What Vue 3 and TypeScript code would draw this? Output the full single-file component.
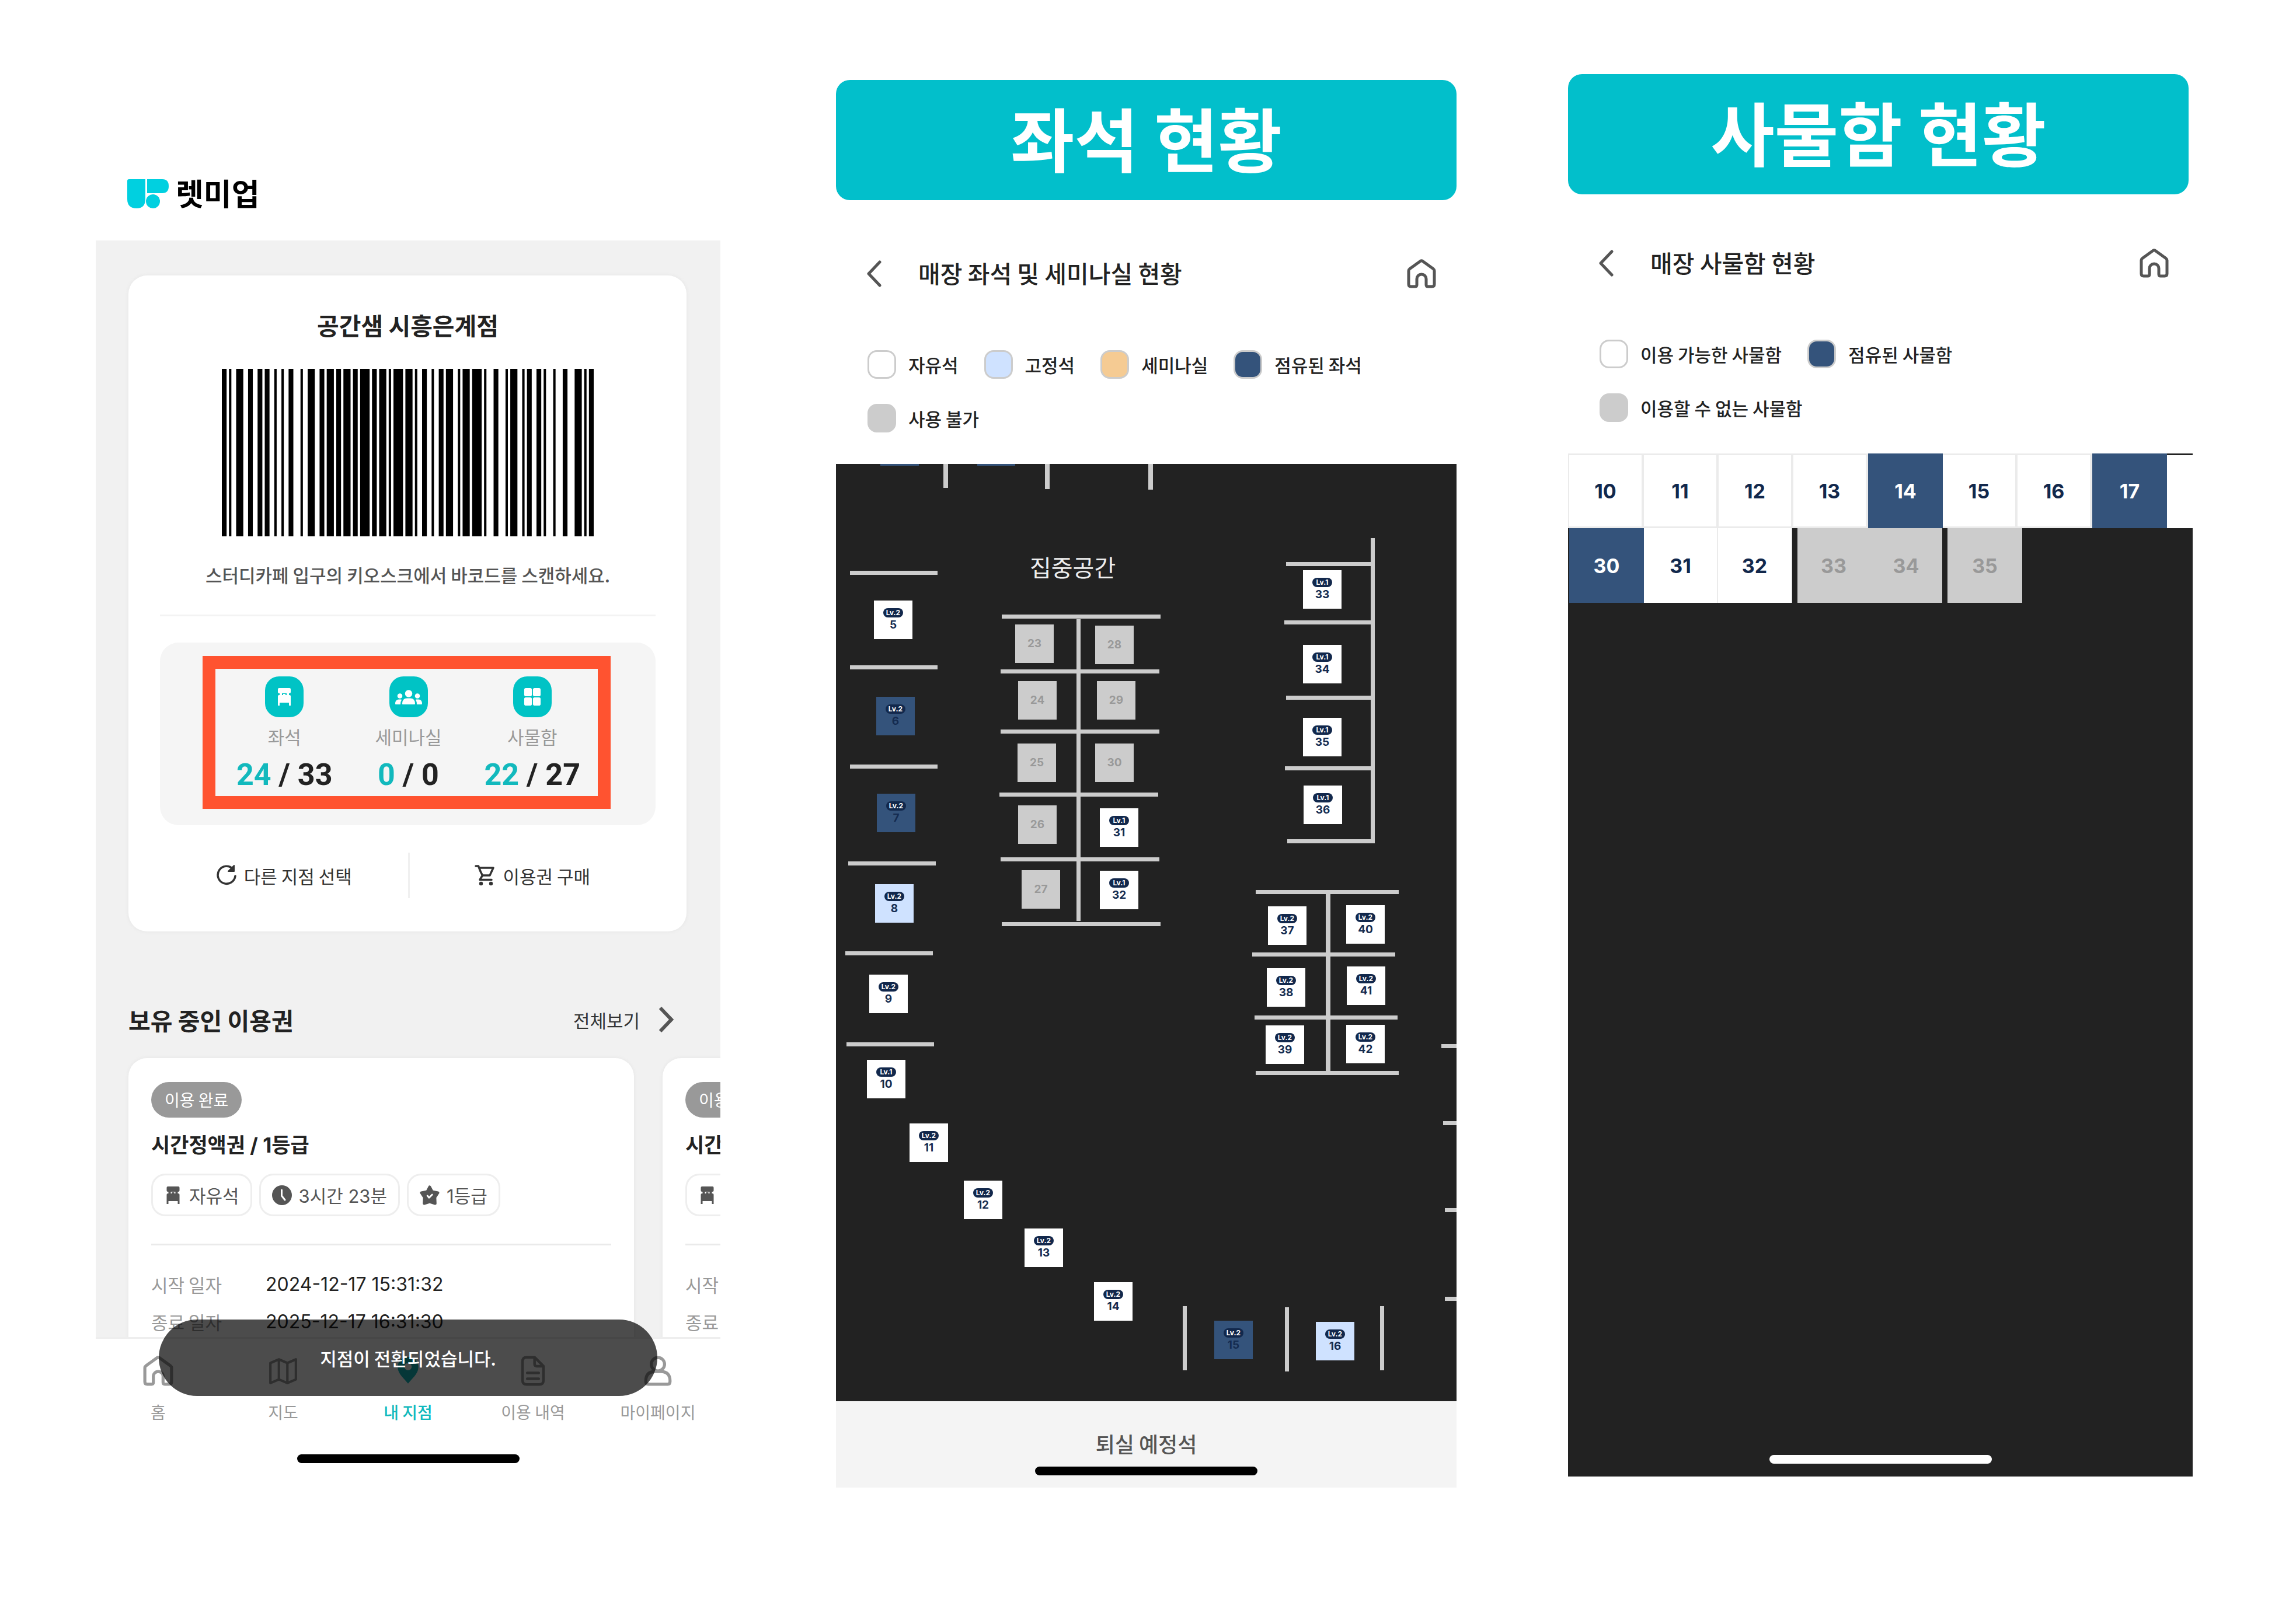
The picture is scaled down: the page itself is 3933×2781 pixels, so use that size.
<script setup lang="ts">
type SeatState = 'free' | 'fixed' | 'taken' | 'off'

interface Seat {
  no: number
  x: number
  y: number
  state: SeatState
  level?: number
}

interface Wall {
  x: number
  y: number
  w: number
  h: number
}

interface Locker {
  no: number
  state: 'free' | 'taken' | 'off'
}

// Barcode bars as [first module, width in modules]
const bars: [number, number][] = [
  [0, 2], [3, 1], [6, 3], [11, 2], [15, 2], [18, 2], [22, 1], [25, 1], [28, 2], [33, 1],
  [36, 3], [41, 2], [44, 3], [48, 2], [51, 3], [55, 2], [58, 4], [63, 2], [66, 3], [70, 1],
  [72, 4], [77, 3], [81, 1], [84, 2], [88, 1], [91, 2], [94, 3], [99, 1], [101, 3], [105, 4],
  [110, 1], [114, 2], [119, 1], [121, 3], [126, 1], [128, 2], [132, 2], [135, 1], [139, 1],
  [143, 2], [148, 3], [152, 1], [154, 2],
]

const stats = [
  { icon: 'stool', label: '좌석', used: 24, total: 33 },
  { icon: 'people', label: '세미나실', used: 0, total: 0 },
  { icon: 'grid', label: '사물함', used: 22, total: 27 },
]

const passes = [1, 2]

const tabs = [
  { icon: 'home', label: '홈', active: false },
  { icon: 'map', label: '지도', active: false },
  { icon: 'pin', label: '내 지점', active: true },
  { icon: 'doc', label: '이용 내역', active: false },
  { icon: 'person', label: '마이페이지', active: false },
]

const seatLegend = [
  { kind: 'free', label: '자유석' },
  { kind: 'fixed', label: '고정석' },
  { kind: 'seminar', label: '세미나실' },
  { kind: 'taken', label: '점유된 좌석' },
  { kind: 'off', label: '사용 불가' },
]

const lockerLegend = [
  { kind: 'free', label: '이용 가능한 사물함' },
  { kind: 'taken', label: '점유된 사물함' },
  { kind: 'off', label: '이용할 수 없는 사물함' },
]

const seats: Seat[] = [
  { no: 5, x: 65, y: 234, state: 'free', level: 2 },
  { no: 6, x: 69, y: 399, state: 'taken', level: 2 },
  { no: 7, x: 70, y: 565, state: 'taken', level: 2 },
  { no: 8, x: 67, y: 720, state: 'fixed', level: 2 },
  { no: 9, x: 57, y: 875, state: 'free', level: 2 },
  { no: 10, x: 53, y: 1021, state: 'free', level: 1 },
  { no: 11, x: 126, y: 1130, state: 'free', level: 2 },
  { no: 12, x: 219, y: 1228, state: 'free', level: 2 },
  { no: 13, x: 323, y: 1310, state: 'free', level: 2 },
  { no: 14, x: 442, y: 1402, state: 'free', level: 2 },
  { no: 15, x: 648, y: 1468, state: 'taken', level: 2 },
  { no: 16, x: 822, y: 1470, state: 'fixed', level: 2 },
  { no: 23, x: 307, y: 275, state: 'off' },
  { no: 24, x: 312, y: 372, state: 'off' },
  { no: 25, x: 311, y: 479, state: 'off' },
  { no: 26, x: 312, y: 585, state: 'off' },
  { no: 27, x: 318, y: 696, state: 'off' },
  { no: 28, x: 444, y: 277, state: 'off' },
  { no: 29, x: 447, y: 372, state: 'off' },
  { no: 30, x: 444, y: 479, state: 'off' },
  { no: 31, x: 452, y: 590, state: 'free', level: 1 },
  { no: 32, x: 452, y: 697, state: 'free', level: 1 },
  { no: 33, x: 800, y: 182, state: 'free', level: 1 },
  { no: 34, x: 800, y: 310, state: 'free', level: 1 },
  { no: 35, x: 800, y: 435, state: 'free', level: 1 },
  { no: 36, x: 801, y: 551, state: 'free', level: 1 },
  { no: 37, x: 740, y: 758, state: 'free', level: 2 },
  { no: 38, x: 738, y: 864, state: 'free', level: 2 },
  { no: 39, x: 736, y: 962, state: 'free', level: 2 },
  { no: 40, x: 874, y: 756, state: 'free', level: 2 },
  { no: 41, x: 875, y: 861, state: 'free', level: 2 },
  { no: 42, x: 874, y: 961, state: 'free', level: 2 },
]

const walls: Wall[] = [
  // stubs along the top edge
  { x: 184, y: 0, w: 8, h: 41 },
  { x: 358, y: 0, w: 8, h: 43 },
  { x: 535, y: 0, w: 8, h: 44 },
  // left row
  { x: 24, y: 183, w: 150, h: 7 },
  { x: 24, y: 345, w: 150, h: 7 },
  { x: 24, y: 515, w: 150, h: 7 },
  { x: 21, y: 681, w: 150, h: 7 },
  { x: 16, y: 835, w: 150, h: 7 },
  { x: 18, y: 991, w: 150, h: 7 },
  // focus zone
  { x: 284, y: 258, w: 272, h: 7 },
  { x: 282, y: 352, w: 272, h: 7 },
  { x: 282, y: 455, w: 272, h: 7 },
  { x: 280, y: 563, w: 272, h: 7 },
  { x: 282, y: 674, w: 272, h: 7 },
  { x: 284, y: 785, w: 272, h: 7 },
  { x: 412, y: 266, w: 7, h: 517 },
  // right row
  { x: 916, y: 127, w: 7, h: 523 },
  { x: 771, y: 168, w: 146, h: 7 },
  { x: 768, y: 268, w: 149, h: 7 },
  { x: 771, y: 397, w: 146, h: 7 },
  { x: 769, y: 518, w: 148, h: 7 },
  { x: 773, y: 643, w: 144, h: 7 },
  // six-seat block
  { x: 719, y: 730, w: 245, h: 7 },
  { x: 713, y: 837, w: 245, h: 7 },
  { x: 717, y: 945, w: 245, h: 7 },
  { x: 719, y: 1040, w: 245, h: 7 },
  { x: 839, y: 732, w: 8, h: 310 },
  // right edge
  { x: 1037, y: 994, w: 26, h: 7 },
  { x: 1040, y: 1126, w: 23, h: 7 },
  { x: 1043, y: 1275, w: 20, h: 7 },
  { x: 1043, y: 1427, w: 20, h: 7 },
  // bottom row
  { x: 594, y: 1443, w: 7, h: 110 },
  { x: 769, y: 1445, w: 7, h: 110 },
  { x: 932, y: 1443, w: 7, h: 110 },
]

// Occupied seats scrolled past the top edge
const slivers: Wall[] = [
  { x: 76, y: 0, w: 66, h: 3 },
  { x: 242, y: 0, w: 65, h: 3 },
]

const topLockers: Locker[] = [
  { no: 10, state: 'free' },
  { no: 11, state: 'free' },
  { no: 12, state: 'free' },
  { no: 13, state: 'free' },
  { no: 14, state: 'taken' },
  { no: 15, state: 'free' },
  { no: 16, state: 'free' },
  { no: 17, state: 'taken' },
  { no: 18, state: 'free' },
]

const lowerLockers: Locker[][] = [
  [
    { no: 30, state: 'taken' },
    { no: 31, state: 'free' },
    { no: 32, state: 'free' },
  ],
  [
    { no: 33, state: 'off' },
    { no: 34, state: 'off' },
  ],
  [{ no: 35, state: 'off' }],
]
</script>

<template>
  <svg class="sprite" aria-hidden="true">
    <symbol id="i-home" viewBox="0 0 50 50">
      <path d="M3 20 Q3 18 5 16.500 L23 3.500 Q25 2 27 3.500 L45 16.500 Q47 18 47 20 V43 Q47 47 43 47 H36 Q33 47 33 44 V34 A8 8 0 0 0 17 34 V44 Q17 47 14 47 H7 Q3 47 3 43 Z" fill="none" stroke="currentColor" stroke-width="5" stroke-linejoin="round" />
    </symbol>
    <symbol id="i-back" viewBox="0 0 26 46">
      <path d="M23 3 L4 23 L23 43" fill="none" stroke="currentColor" stroke-width="5" stroke-linecap="round" stroke-linejoin="round" />
    </symbol>
    <symbol id="i-stool" viewBox="0 0 24 30">
      <path d="M3 0 H21 Q23 0 23 2 V7 Q23 9 21 9 H3 Q1 9 1 7 V2 Q1 0 3 0 Z M4 8 H8 V13 H4 Z M16 8 H20 V13 H16 Z M10 10 H14 V13 H10 Z M3 12 H21 Q23 12 23 14 V30 H20 V25 H4 V30 H1 V14 Q1 12 3 12 Z" fill="currentColor" />
    </symbol>
    <symbol id="i-people" viewBox="0 0 46 25">
      <g fill="currentColor">
        <circle cx="23" cy="6.500" r="6.200" />
        <path d="M12 24 Q12 14.500 20 14.500 H26 Q34 14.500 34 24 Q34 25 33 25 H13 Q12 25 12 24 Z" />
        <circle cx="8" cy="10.500" r="4.300" />
        <circle cx="38" cy="10.500" r="4.300" />
        <path d="M0 24 Q0 16.500 6 16.500 H10 L11 17 Q9 20 9 25 H1 Q0 25 0 24 Z" />
        <path d="M46 24 Q46 16.500 40 16.500 H36 L35 17 Q37 20 37 25 H45 Q46 25 46 24 Z" />
      </g>
    </symbol>
    <symbol id="i-grid" viewBox="0 0 32 34">
      <g fill="currentColor">
        <rect x="1" y="1" width="14" height="15" rx="3" />
        <rect x="17" y="1" width="14" height="15" rx="3" />
        <rect x="1" y="18" width="14" height="15" rx="3" />
        <rect x="17" y="18" width="14" height="15" rx="3" />
      </g>
    </symbol>
    <symbol id="i-reload" viewBox="0 0 36 36">
      <path d="M29 7 A15 15 0 1 0 33 19" fill="none" stroke="currentColor" stroke-width="3.500" stroke-linecap="round" />
      <path d="M31 1 V11 H21 Z" fill="currentColor" stroke="currentColor" stroke-width="2" stroke-linejoin="round" />
    </symbol>
    <symbol id="i-cart" viewBox="0 0 34 36">
      <path d="M1 2 H5.500 L9 11 L12.500 18 H25 L31 5 H7 M12.500 18 L8 25.500 H28" fill="none" stroke="currentColor" stroke-width="3.500" stroke-linejoin="round" stroke-linecap="round" />
      <circle cx="10" cy="32" r="3.200" fill="currentColor" />
      <circle cx="27" cy="32" r="3.200" fill="currentColor" />
    </symbol>
    <symbol id="i-clock" viewBox="0 0 34 34">
      <circle cx="17" cy="17" r="17" fill="currentColor" />
      <path d="M16.500 8 V18 L22 25" fill="none" stroke="#fff" stroke-width="3" stroke-linecap="round" />
    </symbol>
    <symbol id="i-star" viewBox="0 0 36 36">
      <path d="M18 3 L22.500 11.500 L33 13.500 L27.500 22 L28 33 L18 30 L8 33 L8.500 22 L3 13.500 L13.500 11.500 Z" fill="currentColor" stroke="currentColor" stroke-width="5" stroke-linejoin="round" />
      <path d="M14 19 L17 22.500 L22.500 17" fill="none" stroke="#fff" stroke-width="3" stroke-linecap="round" stroke-linejoin="round" />
    </symbol>
    <symbol id="i-map" viewBox="0 0 50 50">
      <path d="M4 12 L18 6 L32 12 L46 6 V39 L32 45 L18 39 L4 45 Z M18 6 V39 M32 12 V45" fill="none" stroke="currentColor" stroke-width="4" stroke-linejoin="round" />
    </symbol>
    <symbol id="i-pin" viewBox="0 0 50 50">
      <path d="M25 2 C15 2 8 9 8 19 C8 30 19 38 25 46 C31 38 42 30 42 19 C42 9 35 2 25 2 Z M25 12 A6 6 0 1 1 25 24 A6 6 0 1 1 25 12 Z" fill="currentColor" fill-rule="evenodd" />
    </symbol>
    <symbol id="i-doc" viewBox="0 0 46 58">
      <path d="M11 3 H26 L43 20 V47 Q43 55 35 55 H11 Q3 55 3 47 V11 Q3 3 11 3 Z M26 3 V16 Q26 20 30 20 H43 M12 33 H34 M12 44 H34" fill="none" stroke="currentColor" stroke-width="5" stroke-linejoin="round" stroke-linecap="round" />
    </symbol>
    <symbol id="i-person" viewBox="0 0 50 50">
      <circle cx="25" cy="14" r="11" fill="none" stroke="currentColor" stroke-width="5" />
      <path d="M5 42 Q5 26 20 26 H30 Q45 26 45 42 Q45 47 41 47 H9 Q5 47 5 42 Z" fill="none" stroke="currentColor" stroke-width="5" stroke-linejoin="round" />
    </symbol>
  </svg>

  <main class="board">
    <section class="phone">
      <header class="brand">
        <svg class="brand-mark" viewBox="0 0 71 50" aria-hidden="true">
          <path d="M3 0 H31 V34 Q31 50 16 50 Q0 50 0 34 V3 Q0 0 3 0 Z" fill="#00d0e0" />
          <path d="M34 0 H60 Q71 0 71 12 Q71 24 60 24 H34 Z" fill="#00d0e0" />
          <circle cx="44" cy="38" r="12" fill="#00d0e0" />
        </svg>
        <span class="brand-name">렛미업</span>
      </header>

      <div class="feed">
        <article class="branch">
          <h1 class="branch-name">공간샘 시흥은계점</h1>
          <svg class="barcode" viewBox="0 0 156 100" preserveAspectRatio="none" role="img" aria-label="입장 바코드">
            <rect v-for="[x, w] in bars" :key="x" :x="x" y="0" :width="w" height="100" />
          </svg>
          <p class="hint">스터디카페 입구의 키오스크에서 바코드를 스캔하세요.</p>
          <div class="usage">
            <ul class="usage-frame">
              <li v-for="s in stats" :key="s.label" class="stat">
                <span class="stat-icon"><svg :class="s.icon"><use :href="'#i-' + s.icon" /></svg></span>
                <span class="stat-label">{{ s.label }}</span>
                <span class="stat-value"><em>{{ s.used }}</em> / {{ s.total }}</span>
              </li>
            </ul>
          </div>
          <div class="actions">
            <button type="button"><svg><use href="#i-reload" /></svg>다른 지점 선택</button>
            <button type="button"><svg><use href="#i-cart" /></svg>이용권 구매</button>
          </div>
        </article>

        <div class="section-head">
          <h2>보유 중인 이용권</h2>
          <a href="#passes">전체보기<svg viewBox="0 0 26 46"><path d="M3 3 L22 23 L3 43" fill="none" stroke="currentColor" stroke-width="6" /></svg></a>
        </div>

        <div id="passes" class="passes">
          <article v-for="p in passes" :key="p" class="pass">
            <span class="badge">이용 완료</span>
            <h3>시간정액권 / 1등급</h3>
            <div class="chips">
              <span class="chip"><svg class="stool"><use href="#i-stool" /></svg>자유석</span>
              <span class="chip"><svg><use href="#i-clock" /></svg>3시간 23분</span>
              <span class="chip"><svg><use href="#i-star" /></svg>1등급</span>
            </div>
            <dl>
              <div><dt>시작 일자</dt><dd>2024-12-17 15:31:32</dd></div>
              <div><dt>종료 일자</dt><dd>2025-12-17 16:31:30</dd></div>
            </dl>
          </article>
        </div>
      </div>

      <nav class="tabs">
        <a v-for="t in tabs" :key="t.label" href="#" :class="{ active: t.active }">
          <svg><use :href="'#i-' + t.icon" /></svg>{{ t.label }}
        </a>
        <div class="toast" role="status">지점이 전환되었습니다.</div>
      </nav>
      <div class="indicator"></div>
    </section>

    <section class="phone seats-view">
      <h2 class="banner">좌석 현황</h2>
      <header class="bar">
        <button type="button" aria-label="뒤로"><svg class="back"><use href="#i-back" /></svg></button>
        <h3>매장 좌석 및 세미나실 현황</h3>
        <button type="button" aria-label="홈"><svg class="house"><use href="#i-home" /></svg></button>
      </header>
      <ul class="legend">
        <li v-for="l in seatLegend" :key="l.kind"><i :class="l.kind"></i>{{ l.label }}</li>
      </ul>
      <div class="floor">
        <svg class="walls" aria-hidden="true">
          <rect v-for="(w, i) in walls" :key="i" :x="w.x" :y="w.y" :width="w.w" :height="w.h" fill="#ccc" />
          <rect v-for="(w, i) in slivers" :key="'s' + i" :x="w.x" :y="w.y" :width="w.w" :height="w.h" fill="#34537b" />
        </svg>
        <span class="zone">집중공간</span>
        <button
          v-for="s in seats"
          :key="s.no"
          type="button"
          class="seat"
          :class="s.state"
          :style="{ left: s.x + 'px', top: s.y + 'px' }"
        >
          <small v-if="s.level">Lv.{{ s.level }}</small>
          <span>{{ s.no }}</span>
        </button>
      </div>
      <footer class="leaving">
        <span>퇴실 예정석</span>
        <div class="indicator"></div>
      </footer>
    </section>

    <section class="phone lockers-view">
      <h2 class="banner">사물함 현황</h2>
      <header class="bar">
        <button type="button" aria-label="뒤로"><svg class="back"><use href="#i-back" /></svg></button>
        <h3>매장 사물함 현황</h3>
        <button type="button" aria-label="홈"><svg class="house"><use href="#i-home" /></svg></button>
      </header>
      <ul class="legend">
        <li v-for="l in lockerLegend" :key="l.kind"><i :class="l.kind"></i>{{ l.label }}</li>
      </ul>
      <div class="lockers">
        <div class="locker-row">
          <button v-for="l in topLockers" :key="l.no" type="button" class="locker" :class="l.state">{{ l.no }}</button>
        </div>
        <div class="locker-row lower">
          <div v-for="(g, i) in lowerLockers" :key="i" class="locker-group">
            <button v-for="l in g" :key="l.no" type="button" class="locker" :class="l.state">{{ l.no }}</button>
          </div>
        </div>
        <div class="indicator light"></div>
      </div>
    </section>
  </main>
</template>

<style>
body {
  background: #fff;
}
</style>

<style scoped>
* {
  box-sizing: border-box;
  margin: 0;
  padding: 0;
}

.sprite {
  position: absolute;
  width: 0;
  height: 0;
}

.board {
  display: grid;
  grid-template-columns: repeat(3, minmax(0, 1fr));
  gap: 191px;
  align-items: start;
  padding: 0 177px 232px 164px;
  font-family: "Noto Sans CJK KR", "Noto Sans", sans-serif;
  font-size: 31px;
  color: #222;
}

button {
  border: 0;
  background: none;
  font: inherit;
  color: inherit;
}

a {
  color: inherit;
  text-decoration: none;
}

ul {
  list-style: none;
}

svg {
  display: block;
}

/* My branch */
.brand {
  display: flex;
  align-items: center;
  gap: 12px;
  height: 412px;
  padding: 252px 54px 0;
}

.brand-mark {
  width: 71px;
  height: 50px;
}

.brand-name {
  padding-bottom: 4px;
  font-size: 52px;
  line-height: 60px;
  font-weight: 700;
  color: #000;
}

.feed {
  height: 1879px;
  overflow: hidden;
  padding: 60px 0 0 56px;
  background: #f1f1f1;
}

.branch {
  margin-right: 58px;
  padding: 54px 53px 57px 54px;
  border-radius: 32px;
  background: #fff;
  box-shadow: 0 0 4px 2px #eaeaea;
}

.branch-name {
  font-size: 41px;
  line-height: 60px;
  font-weight: 700;
  text-align: center;
}

.barcode {
  width: 637px;
  height: 287px;
  margin: 46px auto 42px;
}

.hint {
  padding-bottom: 44px;
  border-bottom: 3px solid #f3f3f3;
  line-height: 48px;
  font-weight: 500;
  text-align: center;
  color: #555;
}

.usage {
  margin-top: 45px;
  padding: 23px 77px 28px 73px;
  border-radius: 32px;
  background: #f5f5f5;
}

.usage-frame {
  display: flex;
  justify-content: space-between;
  height: 262px;
  padding: 13px 30px 0 36px;
  border: 22px solid #ff5330;
}

.stat {
  display: flex;
  flex-direction: column;
  align-items: center;
}

.stat-icon {
  display: grid;
  place-items: center;
  width: 66px;
  height: 70px;
  border-radius: 24px;
  background: #00c3c5;
  color: #fff;
}

.stat-icon svg {
  width: 30px;
  height: 32px;
}

.stat-icon .people {
  width: 46px;
  height: 25px;
}

.stat-icon .stool {
  width: 24px;
  height: 30px;
}

.stat-label {
  margin-top: 13px;
  line-height: 40px;
  color: #999;
}

.stat-value {
  margin-top: 16px;
  font-family: Roboto, "Noto Sans", sans-serif;
  font-size: 52px;
  line-height: 60px;
  font-weight: 700;
}

.stat-value em {
  font-style: normal;
  color: #12b9bd;
}

.actions {
  display: grid;
  grid-template-columns: 1fr 1fr;
  height: 78px;
  margin-top: 47px;
}

.actions button {
  display: flex;
  align-items: center;
  justify-content: center;
  gap: 12px;
  color: #333;
}

.actions button + button {
  border-left: 3px solid #f0f0f0;
}

.actions svg {
  width: 36px;
  height: 36px;
}

.section-head {
  display: flex;
  align-items: center;
  justify-content: space-between;
  height: 60px;
  margin: 121px 80px 36px 0;
}

.section-head h2 {
  font-size: 41px;
  line-height: 60px;
  font-weight: 700;
}

.section-head a {
  display: flex;
  align-items: center;
  gap: 32px;
  color: #333;
}

.section-head svg {
  width: 26px;
  height: 46px;
  color: #555;
}

.passes {
  display: flex;
  gap: 49px;
}

.pass {
  flex: 0 0 866px;
  padding: 41px 39px;
  border-radius: 32px;
  background: #fff;
  box-shadow: 0 0 4px 2px #eaeaea;
}

.badge {
  display: inline-block;
  padding: 0 23px;
  border-radius: 31px;
  background: #999;
  color: #fff;
  font-size: 28px;
  line-height: 61px;
  vertical-align: top;
}

.pass h3 {
  margin-top: 23px;
  font-family: Inter, "Noto Sans CJK KR", sans-serif;
  font-size: 35px;
  line-height: 48px;
  font-weight: 700;
}

.chips {
  display: flex;
  gap: 12px;
  margin-top: 25px;
  padding-bottom: 47px;
  border-bottom: 3px solid #eaeaea;
}

.chip {
  display: flex;
  align-items: center;
  gap: 12px;
  height: 73px;
  padding: 0 19px;
  border: 3px solid #eee;
  border-radius: 24px;
  font-family: Inter, "Noto Sans CJK KR", sans-serif;
  color: #555;
}

.chip svg {
  width: 34px;
  height: 34px;
}

.chip .stool {
  width: 31px;
  height: 30px;
}

.pass dl {
  margin-top: 35px;
}

.pass dl div {
  display: flex;
  line-height: 64px;
}

.pass dt {
  width: 196px;
  color: #999;
}

.pass dd {
  font-family: Inter, "Noto Sans", sans-serif;
  font-size: 32px;
}

.tabs {
  position: relative;
  display: grid;
  grid-template-columns: repeat(5, 1fr);
  height: 201px;
  padding-top: 29px;
  border-top: 3px solid #eee;
  background: #fff;
  font-size: 28px;
  color: #999;
}

.tabs a {
  display: flex;
  flex-direction: column;
  align-items: center;
  gap: 20px;
  height: 124px;
  line-height: 48px;
}

.tabs svg {
  width: 52px;
  height: 52px;
}

.tabs .active {
  font-weight: 500;
  color: #12b9bd;
}

.toast {
  position: absolute;
  top: -33px;
  left: 108px;
  right: 108px;
  height: 131px;
  border-radius: 66px;
  background: rgba(0, 0, 0, 0.7);
  color: #fff;
  font-size: 31px;
  font-weight: 500;
  line-height: 131px;
  text-align: center;
}

.indicator {
  width: 381px;
  height: 15px;
  margin: 0 auto;
  border-radius: 8px;
  background: #000;
}

.indicator.light {
  background: #fff;
}

/* Shared by the seat and locker views */
.seats-view {
  padding: 137px 0 0 7px;
}

.lockers-view {
  padding-top: 127px;
}

.banner {
  height: 206px;
  border-radius: 24px;
  background: #02bfcb;
  color: #fff;
  font-size: 119px;
  line-height: 194px;
  font-weight: 700;
  text-align: center;
}

.lockers-view .banner {
  margin-right: 7px;
}

.bar {
  display: flex;
  align-items: center;
  height: 60px;
  margin-top: 96px;
  padding: 0 35px 0 52px;
}

.lockers-view .bar {
  margin-top: 88px;
  padding-right: 41px;
}

.bar h3 {
  flex: 1;
  padding: 0 0 5px 63px;
  font-size: 41px;
  line-height: 60px;
  font-weight: 500;
}

.bar button {
  color: #555;
}

.back {
  width: 26px;
  height: 46px;
}

.house {
  width: 50px;
  height: 50px;
}

.legend {
  display: flex;
  flex-wrap: wrap;
  gap: 43px 44px;
  margin: 101px 41px 54px 54px;
}

.legend li {
  display: flex;
  align-items: center;
  gap: 21px;
  line-height: 49px;
  font-weight: 500;
}

.legend i {
  width: 49px;
  height: 49px;
  border: 3px solid #ccc;
  border-radius: 16px;
}

.free {
  background: #fff;
}

.fixed {
  background: #cfe2ff;
}

.seminar {
  background: #f5cb93;
}

.taken {
  background: #34537b;
}

.off {
  background: #ccc;
}

.floor {
  position: relative;
  height: 1606px;
  overflow: hidden;
  background: #222;
}

.walls {
  width: 100%;
  height: 100%;
}

.zone {
  position: absolute;
  top: 146px;
  left: 332px;
  font-size: 40px;
  line-height: 60px;
  color: #eee;
}

.seat {
  position: absolute;
  display: flex;
  flex-direction: column;
  align-items: center;
  justify-content: center;
  gap: 2px;
  width: 66px;
  height: 66px;
  font-family: Inter, "Noto Sans", sans-serif;
  font-size: 19px;
  line-height: 22px;
  font-weight: 700;
  color: #142b50;
}

.seat small {
  width: 34px;
  border-radius: 8px;
  background: #12284c;
  color: #fff;
  font-size: 12px;
  line-height: 16px;
}

.seat.off {
  color: #999;
}

.leaving {
  height: 148px;
  padding-top: 42px;
  background: #f4f4f4;
  text-align: center;
  font-size: 36px;
  line-height: 60px;
  font-weight: 500;
  color: #555;
}

.leaving span {
  display: block;
  padding-bottom: 10px;
}

/* Lockers */
.lockers {
  height: 1753px;
  overflow: hidden;
  background: #222;
}

.locker-row {
  display: flex;
  border-left: 2px solid #ebebeb;
}

.locker {
  flex: 0 0 128px;
  height: 128px;
  font-family: Inter, "Noto Sans", sans-serif;
  font-size: 34px;
  font-weight: 700;
  color: #12284c;
}

.locker.free {
  border: solid #ebebeb;
  border-width: 3px 4px 3px 0;
}

.locker.taken {
  color: #fff;
}

.locker-row > .locker:last-child {
  border-width: 3px 0;
  border-color: #222 transparent #fff;
}

.lower {
  gap: 9px;
  border-color: #222;
}

.locker-group {
  display: flex;
}

.lower .locker.free {
  flex-basis: 127px;
  border-width: 0 2px 0 0;
  border-color: #ebebeb;
}

.lower .locker.off {
  color: #999;
}

.lower .locker.off:not(:only-child) {
  flex-basis: 124px;
}

.lockers .indicator {
  margin-top: 1460px;
}
</style>
